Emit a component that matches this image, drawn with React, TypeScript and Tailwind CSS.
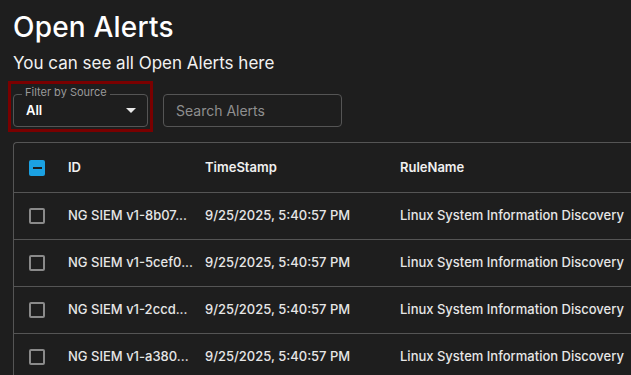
import React from 'react'

const rows = [
  { id: 'NG SIEM v1-8b07...', ts: '9/25/2025, 5:40:57 PM', rule: 'Linux System Information Discovery' },
  { id: 'NG SIEM v1-5cef0...', ts: '9/25/2025, 5:40:57 PM', rule: 'Linux System Information Discovery' },
  { id: 'NG SIEM v1-2ccd...', ts: '9/25/2025, 5:40:57 PM', rule: 'Linux System Information Discovery' },
  { id: 'NG SIEM v1-a380...', ts: '9/25/2025, 5:40:57 PM', rule: 'Linux System Information Discovery' },
]

function Checkbox({ checked }: { checked?: boolean }) {
  if (checked) {
    return (
      <div className="w-4 h-4 rounded-[2px] bg-[#1ba1e2] flex items-center justify-center">
        <div className="w-[9px] h-[2px] bg-[#1e1e1e]" />
      </div>
    )
  }
  return <div className="w-4 h-4 rounded-[2px] border-2 border-[#8a8a8a]" />
}

export default function App() {
  return (
    <div
      className="w-[631px] h-[375px] overflow-hidden bg-[#1e1e1e] text-white pl-[13px]"
      style={{ fontFamily: 'Inter, "Noto Sans", sans-serif' }}
    >
      <h1 className="text-[28px] leading-none font-medium pt-[13px] tracking-[0.2px]">Open Alerts</h1>
      <p className="text-[17px] leading-none mt-[14px] text-[#f2f2f2]">You can see all Open Alerts here</p>

      {/* filters */}
      <div className="flex items-start mt-[9px] -ml-[5px]">
        <div className="border-[3px] border-[#7a0000] p-[2px] pt-[10px]">
          <div className="relative w-[135px] h-[33px] border border-[#555] rounded-[4px] flex items-center justify-between pl-[12px] pr-[11px]">
            <span className="absolute -top-[8px] left-[8px] px-[3px] bg-[#1e1e1e] text-[11px] leading-none text-[#9a9a9a]">
              Filter by Source
            </span>
            <span className="text-[13px] font-semibold">All</span>
            <svg width="10" height="5" viewBox="0 0 10 5">
              <path d="M0 0 L10 0 L5 5 Z" fill="#e8e8e8" />
            </svg>
          </div>
        </div>
        <div className="ml-[10px] mt-[13px] w-[179px] h-[33px] border border-[#555] rounded-[4px] flex items-center pl-[12px] text-[14px] text-[#8f8f8f]">
          Search Alerts
        </div>
      </div>

      {/* table */}
      <div className="mt-[10px] border-l border-t border-[#555] rounded-tl-[4px] w-[640px]">
        <div className="flex items-center h-[50px] border-b border-[#555] text-[13px] font-semibold text-[#f0f0f0]">
          <div className="w-[54px] pl-[15px]">
            <Checkbox checked />
          </div>
          <div className="w-[137px]">ID</div>
          <div className="w-[195px]">TimeStamp</div>
          <div>RuleName</div>
        </div>
        {rows.map((r, i) => (
          <div
            key={i}
            className="flex items-center h-[47px] border-b border-[#555] text-[13px] font-medium text-[#e6e6e6]"
          >
            <div className="w-[54px] pl-[15px]">
              <Checkbox />
            </div>
            <div className="w-[137px] whitespace-nowrap">{r.id}</div>
            <div className="w-[195px] whitespace-nowrap">{r.ts}</div>
            <div className="whitespace-nowrap">{r.rule}</div>
          </div>
        ))}
      </div>
    </div>
  )
}
